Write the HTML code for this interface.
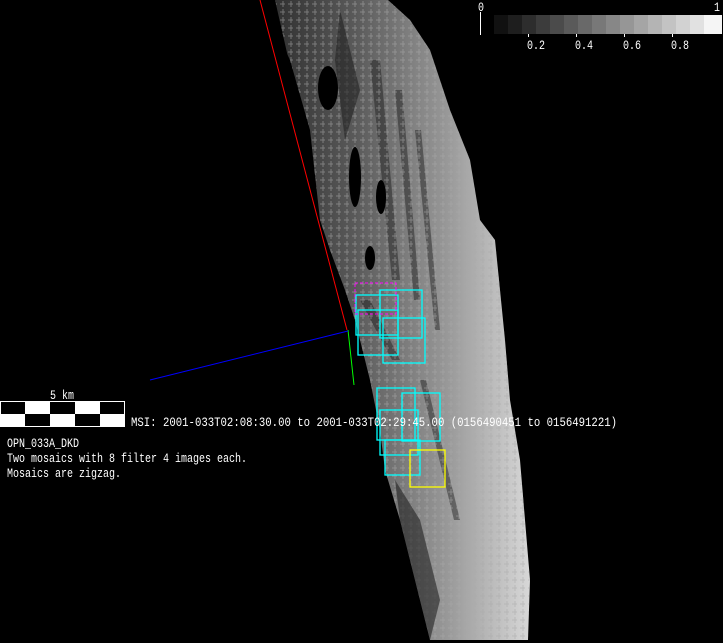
<!DOCTYPE html>
<html><head><meta charset="utf-8"><style>
html,body{margin:0;padding:0;background:#000;width:723px;height:643px;overflow:hidden}
svg{position:absolute;left:0;top:0}
.t{font-family:"Liberation Mono",monospace;font-size:12.5px;fill:#fff}
</style></head><body>
<svg width="723" height="643" viewBox="0 0 723 643">
<defs>
<linearGradient id="g" x1="0" y1="0" x2="1" y2="0">
<stop offset="0" stop-color="#2a2a2a"/><stop offset="0.35" stop-color="#5a5a5a"/><stop offset="0.7" stop-color="#9a9a9a"/><stop offset="1" stop-color="#d8d8d8"/>
</linearGradient>
<pattern id="p" width="8" height="8" patternUnits="userSpaceOnUse">
<path d="M0 4h5M3 1v6" stroke="#aaa" stroke-width="1" opacity="0.55"/>
</pattern>
</defs>
<polygon fill="url(#g)" points="262,0 290,60 310,130 320,220 330,250 345,290 355,320 370,380 380,430 385,470 400,520 415,580 430,640 528,640 530,580 525,520 520,460 510,400 505,340 500,290 495,240 480,220 470,160 450,110 430,50 410,20 388,0"/>
<g fill="#1a1a1a" opacity="0.45">
<polygon points="370,60 380,60 400,280 392,280"/>
<polygon points="395,90 402,90 420,300 414,300"/>
<polygon points="415,130 421,130 440,330 435,330"/>
<polygon points="360,300 370,300 400,360 392,360"/>
<polygon points="420,380 426,380 460,520 454,520"/>
</g>
<polygon fill="url(#p)" points="262,0 290,60 310,130 320,220 330,250 345,290 355,320 370,380 380,430 385,470 400,520 415,580 430,640 528,640 530,580 525,520 520,460 510,400 505,340 500,290 495,240 480,220 470,160 450,110 430,50 410,20 388,0"/>
<g fill="#000">
<ellipse cx="328" cy="88" rx="10" ry="22"/>
<ellipse cx="355" cy="177" rx="6" ry="30"/>
<ellipse cx="381" cy="197" rx="5" ry="17"/>
<ellipse cx="370" cy="258" rx="5" ry="12"/>
<polygon points="262,0 275,0 300,110 312,200 320,230 300,210 280,100"/>
</g>
<g fill="#222" opacity="0.6">
<polygon points="395,480 420,520 440,600 430,640 415,580 400,520"/>
<polygon points="340,10 360,90 345,140 335,60"/>
</g>
<line x1="260" y1="0" x2="347" y2="330" stroke="#f00"/>
<line x1="348" y1="330" x2="354" y2="385" stroke="#0f0"/>
<line x1="150" y1="380" x2="348" y2="331" stroke="#00f"/>
<g fill="none" stroke="#0ff" stroke-width="1.3">
<rect x="356" y="295" width="42" height="40"/><rect x="380" y="290" width="42" height="48"/>
<rect x="358" y="310" width="40" height="45"/><rect x="383" y="318" width="42" height="45"/>
<rect x="377" y="388" width="38" height="52"/><rect x="402" y="393" width="38" height="48"/>
<rect x="380" y="410" width="38" height="45"/><rect x="385" y="440" width="35" height="35"/>
</g>
<rect x="355" y="283" width="41" height="31" fill="none" stroke="#f0f" stroke-dasharray="3,2"/>
<rect x="410" y="450" width="35" height="37" fill="none" stroke="#ff0" stroke-width="1.3"/>
<g>
<rect x="494" y="15" width="14" height="19" fill="#111"/><rect x="508" y="15" width="14" height="19" fill="#1e1e1e"/>
<rect x="522" y="15" width="14" height="19" fill="#2d2d2d"/><rect x="536" y="15" width="14" height="19" fill="#3c3c3c"/>
<rect x="550" y="15" width="14" height="19" fill="#4b4b4b"/><rect x="564" y="15" width="14" height="19" fill="#5a5a5a"/>
<rect x="578" y="15" width="14" height="19" fill="#696969"/><rect x="592" y="15" width="14" height="19" fill="#787878"/>
<rect x="606" y="15" width="14" height="19" fill="#878787"/><rect x="620" y="15" width="14" height="19" fill="#969696"/>
<rect x="634" y="15" width="14" height="19" fill="#a5a5a5"/><rect x="648" y="15" width="14" height="19" fill="#b4b4b4"/>
<rect x="662" y="15" width="14" height="19" fill="#c3c3c3"/><rect x="676" y="15" width="14" height="19" fill="#d2d2d2"/>
<rect x="690" y="15" width="14" height="19" fill="#e1e1e1"/><rect x="704" y="15" width="18" height="19" fill="#f5f5f5"/>
<line x1="480.5" y1="12" x2="480.5" y2="35" stroke="#fff"/>
<line x1="528.5" y1="34" x2="528.5" y2="37" stroke="#fff"/><line x1="576.5" y1="34" x2="576.5" y2="37" stroke="#fff"/>
<line x1="624.5" y1="34" x2="624.5" y2="37" stroke="#fff"/><line x1="672.5" y1="34" x2="672.5" y2="37" stroke="#fff"/>
<text class="t" x="478" y="11" textLength="6" lengthAdjust="spacingAndGlyphs">0</text><text class="t" x="714" y="11" textLength="6" lengthAdjust="spacingAndGlyphs">1</text>
<text class="t" x="527" y="49" textLength="18" lengthAdjust="spacingAndGlyphs">0.2</text><text class="t" x="575" y="49" textLength="18" lengthAdjust="spacingAndGlyphs">0.4</text>
<text class="t" x="623" y="49" textLength="18" lengthAdjust="spacingAndGlyphs">0.6</text><text class="t" x="671" y="49" textLength="18" lengthAdjust="spacingAndGlyphs">0.8</text>
</g>
<rect x="0" y="401" width="125" height="26" fill="#fff"/>
<rect x="1" y="402" width="24" height="12" fill="#000"/><rect x="50" y="402" width="25" height="12" fill="#000"/><rect x="100" y="402" width="24" height="12" fill="#000"/>
<rect x="25" y="414" width="25" height="12" fill="#000"/><rect x="75" y="414" width="25" height="12" fill="#000"/>
<text class="t" x="50" y="399" textLength="24" lengthAdjust="spacingAndGlyphs">5 km</text>
<text class="t" x="131" y="426" textLength="486" lengthAdjust="spacingAndGlyphs">MSI:  2001-033T02:08:30.00 to 2001-033T02:29:45.00 (0156490451 to 0156491221)</text>
<text class="t" x="7" y="447" textLength="72" lengthAdjust="spacingAndGlyphs">OPN_033A_DKD</text>
<text class="t" x="7" y="462" textLength="240" lengthAdjust="spacingAndGlyphs">Two mosaics with 8 filter 4 images each.</text>
<text class="t" x="7" y="477" textLength="114" lengthAdjust="spacingAndGlyphs">Mosaics are zigzag.</text>
</svg>
</body></html>
